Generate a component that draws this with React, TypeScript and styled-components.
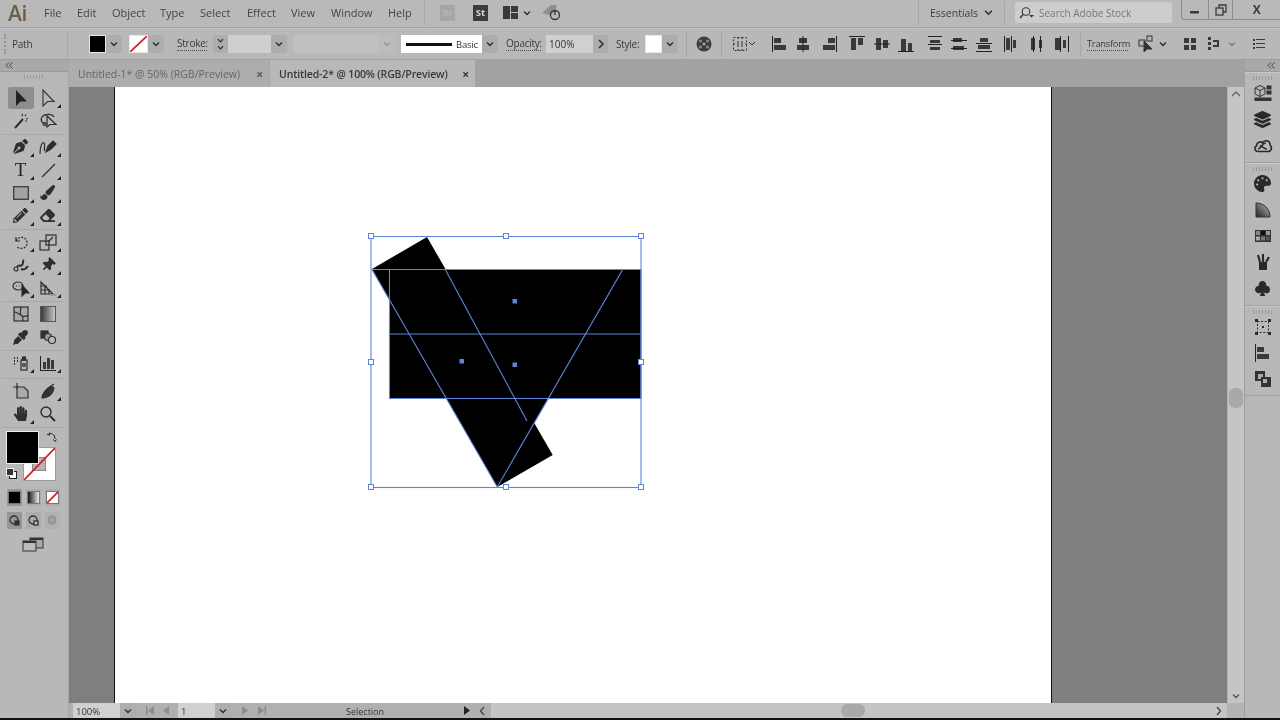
import React from "react";
import styled, { createGlobalStyle } from "styled-components";
import { FaEraser, FaEyeDropper, FaHandPaper, FaLayerGroup, FaPaintBrush, FaPalette, FaPenNib, FaPencilAlt, FaThumbtack } from "react-icons/fa";
import { BsSuitClubFill } from "react-icons/bs";

const Global = createGlobalStyle`
  html, body { margin: 0; padding: 0; background: #000; }
  body { font-family: "Open Sans", "Liberation Sans", sans-serif; }
  * { box-sizing: border-box; }
`;

const INK = "#2e2e2e";
const UI = "#b8b8b8";

const Page = styled.div`
  width: 1280px;
  height: 720px;
  overflow: hidden;
  display: flex;
  flex-direction: column;
  background: ${UI};
  color: #333;
  font-size: 10.5px;
  filter: blur(0.35px);
`;

const MenuBar = styled.div`
  height: 28px;
  flex: none;
  display: flex;
  align-items: center;
  padding-bottom: 2px;
  background: #b9b9b9;
  border-bottom: 1px solid #a4a4a4;
`;

const Logo = styled.div`
  width: 44px;
  padding-left: 8px;
  font: 600 21px/26px "Open Sans", sans-serif;
  letter-spacing: -0.5px;
  color: #6d5d4b;
`;

const MenuItem = styled.div<{ $w: number }>`
  width: ${(p) => p.$w}px;
  font-size: 11px;
  color: #444;
  white-space: nowrap;
`;

const VSep = styled.div<{ $ml?: number; $h?: number }>`
  width: 1px;
  height: ${(p) => p.$h ?? 24}px;
  flex: none;
  margin-left: ${(p) => p.$ml ?? 0}px;
  background: #a6a6a6;
`;

const AppBadge = styled.div<{ $dark?: boolean; $ml: number }>`
  width: 15px;
  height: 16px;
  margin-left: ${(p) => p.$ml}px;
  flex: none;
  display: flex;
  align-items: center;
  justify-content: center;
  font-size: 9.5px;
  font-weight: 700;
  background: ${(p) => (p.$dark ? "#3c3c3c" : "#a6a6a6")};
  color: ${(p) => (p.$dark ? "#d8d8d8" : "#b4b4b4")};
`;

const Slot = styled.div<{ $ml?: number; $w?: number; $dim?: boolean }>`
  width: ${(p) => p.$w ?? 18}px;
  height: 18px;
  margin-left: ${(p) => p.$ml ?? 0}px;
  flex: none;
  display: flex;
  align-items: center;
  justify-content: center;
  color: ${INK};
  opacity: ${(p) => (p.$dim ? 0.45 : 1)};
`;

const Workspace = styled.div`
  margin-left: 11px;
  width: 47px;
  flex: none;
  font-size: 10.5px;
  color: #3d3d3d;
  white-space: nowrap;
`;

const SearchBox = styled.div`
  width: 157px;
  height: 21px;
  margin-left: 10px;
  flex: none;
  display: flex;
  align-items: center;
  gap: 3px;
  padding-left: 3px;
  border-radius: 2px;
  background: #cdcdcd;
  color: #777;
  font-size: 10px;
`;

const WindowControls = styled.div`
  margin-left: 9px;
  align-self: flex-start;
  display: flex;
  height: 20px;
  width: 99px;
  flex: none;
  border: 1px solid #8c8c8c;
  border-top: none;
  border-right: none;
  border-radius: 0 0 0 4px;
`;

const WinButton = styled.div<{ $w: number }>`
  width: ${(p) => p.$w}px;
  display: flex;
  align-items: center;
  justify-content: center;
  color: #3a3a3a;
  font-size: 12px;
  font-weight: 700;
  & + & { border-left: 1px solid #8c8c8c; }
`;

const ControlBar = styled.div`
  height: 32px;
  flex: none;
  display: flex;
  align-items: center;
  background: ${UI};
  border-top: 1px solid #c2c2c2;
  border-bottom: 1px solid #9e9e9e;
`;

const Grip = styled.div`
  width: 3px;
  height: 20px;
  margin-left: 4px;
  flex: none;
  border-left: 2px dotted #959595;
`;

const Label = styled.div<{ $ml: number; $w?: number; $dotted?: boolean; $fs?: number }>`
  margin-left: ${(p) => p.$ml}px;
  width: ${(p) => p.$w}px;
  flex: none;
  font-size: ${(p) => p.$fs ?? 10}px;
  line-height: 13px;
  color: #3a3a3a;
  white-space: nowrap;
  letter-spacing: -0.25px;
  border-bottom: ${(p) => (p.$dotted ? "1px dotted #555" : "none")};
`;

const Swatch = styled.div<{ $ml?: number; $w?: number; $bg: string }>`
  position: relative;
  width: ${(p) => p.$w ?? 17}px;
  height: 18px;
  margin-left: ${(p) => p.$ml ?? 0}px;
  flex: none;
  background: ${(p) => p.$bg};
  border: 1px solid #e6e6e6;
  overflow: hidden;
`;

const Drop = styled.div<{ $ml?: number; $dim?: boolean; $w?: number }>`
  width: ${(p) => p.$w ?? 16}px;
  height: 18px;
  margin-left: ${(p) => p.$ml ?? 0}px;
  flex: none;
  display: flex;
  align-items: center;
  justify-content: center;
  background: ${(p) => (p.$dim ? "#bcbcbc" : "#adadad")};
  border-radius: 0 2px 2px 0;
  color: ${(p) => (p.$dim ? "#999" : INK)};
`;

const Field = styled.div<{ $w: number; $ml?: number; $bg?: string; $h?: number }>`
  width: ${(p) => p.$w}px;
  height: ${(p) => p.$h ?? 18}px;
  margin-left: ${(p) => p.$ml ?? 0}px;
  flex: none;
  display: flex;
  align-items: center;
  padding-left: 3px;
  background: ${(p) => p.$bg ?? "#d0d0d0"};
  font-size: 10px;
  color: #333;
`;

const LinePicker = styled.div`
  width: 81px;
  height: 18px;
  margin-left: 6px;
  flex: none;
  display: flex;
  align-items: center;
  gap: 4px;
  padding-left: 5px;
  background: #fff;
  font-size: 9.5px;
  letter-spacing: -0.2px;
  color: #333;
`;

const LineSample = styled.div`
  width: 46px;
  height: 3px;
  background: #111;
`;

const Stepper = styled.div`
  width: 15px;
  height: 18px;
  margin-left: 6px;
  flex: none;
  display: flex;
  flex-direction: column;
  align-items: center;
  justify-content: center;
  background: #adadad;
  color: ${INK};
`;

const Body = styled.div`
  flex: 1;
  min-height: 0;
  display: flex;
`;

const LeftPanel = styled.div`
  width: 69px;
  flex: none;
  display: flex;
  flex-direction: column;
  background: ${UI};
  border-right: 1px solid #a8a8a8;
`;

const PanelHeader = styled.div<{ $end?: boolean }>`
  height: 12px;
  flex: none;
  display: flex;
  align-items: center;
  justify-content: ${(p) => (p.$end ? "flex-end" : "flex-start")};
  padding: 0 5px;
  background: #a9a9a9;
  border-bottom: 1px solid #9a9a9a;
  color: #444;
`;

const PanelGrip = styled.div`
  width: 20px;
  height: 4px;
  margin: 3px auto 0;
  flex: none;
  background: repeating-linear-gradient(90deg, #9a9a9a 0 1px, transparent 1px 3px);
`;

const ToolGroup = styled.div<{ $pb?: number; $pt?: number; $gap?: number }>`
  padding: ${(p) => p.$pt ?? 0}px 5px ${(p) => p.$pb ?? 2}px;
  margin: 0 2px;
  border-bottom: 1px solid #a9a9a9;
  display: grid;
  grid-template-columns: 27px 27px;
  grid-auto-rows: 23px;
  row-gap: ${(p) => p.$gap ?? 0}px;
  justify-items: center;
  align-items: center;
`;

const Tool = styled.div<{ $more?: boolean; $on?: boolean }>`
  position: relative;
  width: 26px;
  height: 22px;
  display: flex;
  align-items: center;
  justify-content: center;
  color: ${INK};
  border-radius: 2px;
  background: ${(p) => (p.$on ? "#8e8e8e" : "transparent")};
  &::after {
    content: "";
    display: ${(p) => (p.$more ? "block" : "none")};
    position: absolute;
    right: 0;
    bottom: 1px;
    border-style: solid;
    border-width: 0 0 4px 4px;
    border-color: transparent transparent #222 transparent;
  }
`;

const TypeGlyph = styled.span`
  font: 400 19px "Liberation Serif", serif;
  line-height: 18px;
  color: #222;
`;

const ColorWell = styled.div`
  position: relative;
  height: 58px;
  margin-top: 3px;
  flex: none;
`;

const FillBox = styled.div`
  position: absolute;
  left: 6px;
  top: 0;
  width: 33px;
  height: 33px;
  background: #000;
  border: 1px solid #eee;
  z-index: 2;
`;

const StrokeBox = styled.div`
  position: absolute;
  left: 23px;
  top: 16px;
  width: 33px;
  height: 34px;
  background: #fff;
  border: 1px solid #999;
  overflow: hidden;
`;

const StrokeHole = styled.div`
  position: absolute;
  left: 8px;
  top: 9px;
  width: 14px;
  height: 14px;
  background: #b4b4b4;
  border: 1px solid #888;
`;

const Corner = styled.div<{ $left: number; $top: number }>`
  position: absolute;
  left: ${(p) => p.$left}px;
  top: ${(p) => p.$top}px;
  z-index: 3;
  display: flex;
  color: #222;
`;

const ModeRow = styled.div<{ $mt: number }>`
  display: flex;
  justify-content: center;
  gap: 4px;
  margin-top: ${(p) => p.$mt}px;
  padding-right: 2px;
  flex: none;
`;

const ModeButton = styled.div<{ $on?: boolean; $off?: boolean }>`
  width: 15px;
  height: 17px;
  display: flex;
  align-items: center;
  justify-content: center;
  border-radius: 1px;
  background: ${(p) => (p.$on ? "#969696" : "#adadad")};
  opacity: ${(p) => (p.$off ? 0.55 : 1)};
`;

const ModeChip = styled.div<{ $bg: string }>`
  position: relative;
  width: 13px;
  height: 13px;
  overflow: hidden;
  border: 1px solid #777;
  background: ${(p) => p.$bg};
`;

const ScreenMode = styled.div`
  display: flex;
  justify-content: center;
  margin-top: 8px;
  padding-right: 2px;
  color: #333;
`;

const Center = styled.div`
  flex: 1;
  min-width: 0;
  display: flex;
  flex-direction: column;
`;

const TabBar = styled.div`
  height: 27px;
  flex: none;
  display: flex;
  background: #a2a2a2;
`;

const Tab = styled.div<{ $active?: boolean; $w: number }>`
  width: ${(p) => p.$w}px;
  margin-right: 1px;
  flex: none;
  display: flex;
  align-items: center;
  padding: 1px 0 0 9px;
  font-size: 10.5px;
  white-space: nowrap;
  font-weight: ${(p) => (p.$active ? 600 : 400)};
  letter-spacing: ${(p) => (p.$active ? "-0.14px" : "0")};
  color: ${(p) => (p.$active ? "#383838" : "#656565")};
  background: ${(p) => (p.$active ? UI : "#adadad")};
`;

const TabClose = styled.span<{ $active?: boolean }>`
  margin-left: auto;
  margin-right: 6px;
  font-size: 12px;
  font-weight: 700;
  color: ${(p) => (p.$active ? "#333" : "#555")};
`;

const Canvas = styled.div`
  flex: 1;
  min-height: 0;
  display: flex;
  background: #7f7f7f;
  padding-left: 45px;
`;

const Artboard = styled.div`
  position: relative;
  width: 938px;
  background: #fff;
  border-left: 1px solid #111;
  border-right: 1px solid #111;
`;

const Artwork = styled.svg`
  position: absolute;
  left: 240px;
  top: 138px;
`;

const VScroll = styled.div`
  width: 17px;
  flex: none;
  display: flex;
  flex-direction: column;
  align-items: center;
  background: #c5c5c5;
  border-left: 1px solid #b0b0b0;
  color: #555;
`;

const ScrollCap = styled.div`
  height: 14px;
  flex: none;
  display: flex;
  align-items: center;
  justify-content: center;
`;

const VThumb = styled.div`
  width: 14px;
  height: 20px;
  margin-top: 287px;
  flex: none;
  background: #a9a9a9;
  border-radius: 6px;
`;

const Filler = styled.div`
  flex: 1;
`;

const StatusBar = styled.div`
  height: 15px;
  flex: none;
  display: flex;
  align-items: center;
  background: #b0b0b0;
  color: #333;
`;

const StatusField = styled(Field)`
  padding-top: 2px;
  font-size: 9.5px;
`;

const NavArrow = styled.div<{ $ml: number; $dark?: boolean }>`
  margin-left: ${(p) => p.$ml}px;
  flex: none;
  display: flex;
  color: ${(p) => (p.$dark ? "#222" : "#8d8d8d")};
`;

const StatusText = styled.div`
  margin-left: 79px;
  width: 117px;
  padding-top: 2px;
  flex: none;
  font-size: 9px;
`;

const HTrack = styled.div`
  flex: 1;
  height: 15px;
  margin-left: 5px;
  display: flex;
  align-items: center;
  background: #c5c5c5;
  color: #444;
`;

const HThumb = styled.div`
  width: 24px;
  height: 13px;
  margin-left: 350px;
  background: #a9a9a9;
  border-radius: 6px;
`;

const HEnd = styled.svg`
  margin-right: 5px;
`;

const BlackEdge = styled.div`
  height: 2px;
  flex: none;
  background: #111;
`;

const RightPanel = styled.div`
  width: 36px;
  flex: none;
  display: flex;
  flex-direction: column;
  background: ${UI};
  border-left: 1px solid #9e9e9e;
`;

const DockGroup = styled.div`
  flex: none;
  padding-bottom: 3px;
  border-bottom: 1px solid #a0a0a0;
  border-top: 1px solid #c8c8c8;
`;

const DockIcon = styled.div`
  height: 26.2px;
  display: flex;
  align-items: center;
  justify-content: center;
  color: #2a2a2a;
`;

const Chev = ({ size = 8 }: { size?: number }) => (
  <svg width={size} height={size} viewBox="0 0 8 8"><path d="M1 2.5 4 5.5 7 2.5" fill="none" stroke="currentColor" strokeWidth="1.4" /></svg>
);

const DoubleLeft = () => (
  <svg width="8" height="7" viewBox="0 0 8 7"><path d="M4 0.5 1 3.5 4 6.5M7.5 0.5 4.5 3.5 7.5 6.5" fill="none" stroke="currentColor" /></svg>
);

const Ico = ({ size = 18, children }: { size?: number; children: React.ReactNode }) => (
  <svg width={size} height={size} viewBox="0 0 18 18" fill="none" stroke={INK} strokeWidth="1.2">{children}</svg>
);

const Bars = ({ r, lines }: { r: number[][]; lines?: number[][] }) => (
  <svg width="18" height="18" viewBox="0 0 18 18">
    {r.map((b, i) => <rect key={i} x={b[0]} y={b[1]} width={b[2]} height={b[3]} fill="#3a3a3a" />)}
    {(lines || []).map((b, i) => <rect key={i} x={b[0]} y={b[1]} width={b[2]} height={b[3]} fill="#222" />)}
  </svg>
);

const Slash = () => (
  <svg width="100%" height="100%" viewBox="0 0 20 20" preserveAspectRatio="none" style={{ position: "absolute", left: 0, top: 0 }}>
    <path d="M0 20 20 0" stroke="#d8202a" strokeWidth="1.8" vectorEffect="non-scaling-stroke" />
  </svg>
);

// left-to-right: align left/center/right, top/middle/bottom, then the distribute sets
const alignSet: { x: number; r: number[][]; lines: number[][] }[] = [
  { x: 770, r: [[3, 3, 7, 5], [3, 10, 12, 5]], lines: [[1, 1, 1, 16]] },
  { x: 793, r: [[5, 3, 8, 5], [3, 10, 12, 5]], lines: [[8.5, 1, 1, 16]] },
  { x: 819, r: [[8, 3, 7, 5], [3, 10, 12, 5]], lines: [[16, 1, 1, 16]] },
  { x: 847, r: [[3, 3, 5, 12], [10, 3, 5, 7]], lines: [[1, 1, 16, 1]] },
  { x: 872, r: [[3, 3, 5, 12], [10, 5, 5, 8]], lines: [[1, 8.5, 16, 1]] },
  { x: 896, r: [[4, 4, 5, 12], [11, 8, 4, 8]], lines: [[1, 16, 16, 1]] },
  { x: 925, r: [[4, 5, 10, 3], [4, 12, 10, 3]], lines: [[2, 1, 14, 1], [2, 9, 14, 1]] },
  { x: 949, r: [[3, 3, 9, 4], [3, 11, 11, 4]], lines: [[1, 5, 16, 1], [1, 13, 16, 1]] },
  { x: 974, r: [[5, 3, 8, 4], [3, 10, 12, 4]], lines: [[1, 8, 16, 1], [1, 16, 16, 1]] },
  { x: 1002, r: [[3, 3, 4, 12], [10, 5, 3, 8]], lines: [[1, 1, 1, 16], [8, 1, 1, 16]] },
  { x: 1027, r: [[3, 3, 4, 12], [11, 5, 3, 8]], lines: [[5, 1, 1, 16], [12, 1, 1, 16]] },
  { x: 1051, r: [[3, 3, 5, 12], [11, 5, 3, 8]], lines: [[8, 1, 1, 16], [16, 1, 1, 16]] },
];

const menu: [string, number][] = [
  ["File", 33], ["Edit", 35], ["Object", 48], ["Type", 40], ["Select", 47],
  ["Effect", 44], ["View", 40], ["Window", 57], ["Help", 36],
];

export default function App() {
  let alignPrev = 755;
  return (
    <Page>
      <Global />
      <MenuBar>
        <Logo>Ai</Logo>
        {menu.map(([m, w]) => <MenuItem key={m} $w={w}>{m}</MenuItem>)}
        <VSep />
        <AppBadge $ml={15}>Br</AppBadge>
        <AppBadge $dark $ml={18}>St</AppBadge>
        <Slot $ml={14}>
          <Bars r={[[1, 2, 7, 13], [9, 2, 7, 6], [9, 9, 7, 6]]} />
        </Slot>
        <Slot $w={14}><Chev /></Slot>
        <Slot $ml={7} $w={22}>
          <svg width="22" height="18" viewBox="0 0 22 18">
            <path d="M1 9 10 1 16 1 14 8 8 11Z" fill="#8f8f8f" />
            <circle cx="14" cy="11" r="4.5" fill="none" stroke="#333" strokeWidth="1.3" />
            <path d="M14 6v5" stroke="#333" strokeWidth="1.3" />
          </svg>
        </Slot>
        <VSep $ml={355} />
        <Workspace>Essentials</Workspace>
        <Slot $ml={3} $w={16}><Chev size={9} /></Slot>
        <VSep $ml={8} />
        <SearchBox>
          <svg width="18" height="14" viewBox="0 0 18 14">
            <circle cx="8" cy="5.5" r="3.8" fill="none" stroke="#333" strokeWidth="1.1" />
            <path d="M5.3 8.2 2 12" stroke="#333" strokeWidth="1.3" />
            <path d="M11 9h5l-2.5 2.5Z" fill="#333" />
          </svg>
          Search Adobe Stock
        </SearchBox>
        <WindowControls>
          <WinButton $w={26}><svg width="10" height="10" viewBox="0 0 10 10"><rect x="0" y="6" width="9" height="2.5" fill="#3a3a3a" /></svg></WinButton>
          <WinButton $w={25}><svg width="12" height="12" viewBox="0 0 12 12" fill="none" stroke="#3a3a3a" strokeWidth="1.3"><rect x="1" y="4" width="7" height="7" /><path d="M4 4V1h7v7H8" /></svg></WinButton>
          <WinButton $w={48}>X</WinButton>
        </WindowControls>
      </MenuBar>

      <ControlBar>
        <Grip />
        <Label $ml={5} $w={35}>Path</Label>
        <VSep $ml={20} $h={26} />
        <Swatch $ml={21} $bg="#000" />
        <Drop><Chev /></Drop>
        <Swatch $ml={7} $w={19} $bg="#fff"><Slash /></Swatch>
        <Drop><Chev /></Drop>
        <Label $ml={13} $w={30} $dotted>Stroke:</Label>
        <Stepper><Chev size={7} /><Chev size={7} /></Stepper>
        <Field $w={43} $bg="#cfcfcf" />
        <Drop><Chev /></Drop>
        <Field $w={85} $ml={6} $bg="#c0c0c0" />
        <Drop $dim $w={17}><Chev /></Drop>
        <LinePicker><LineSample />Basic</LinePicker>
        <Drop><Chev /></Drop>
        <Label $ml={8} $w={35} $dotted>Opacity:</Label>
        <Field $w={47} $ml={5}>100%</Field>
        <Drop $w={15}><svg width="8" height="10" viewBox="0 0 8 10"><path d="M2 1 6 5 2 9" fill="none" stroke="#222" strokeWidth="1.4" /></svg></Drop>
        <Label $ml={8} $w={23}>Style:</Label>
        <Swatch $ml={6} $bg="#fff" />
        <Drop><Chev /></Drop>
        <VSep $ml={8} $h={26} />
        <Slot $ml={8}>
          <svg width="16" height="16" viewBox="0 0 16 16">
            <circle cx="8" cy="8" r="7.5" fill="#3c3c3c" />
            <circle cx="8" cy="8" r="1.5" fill="#aaa" />
            <circle cx="4.5" cy="5" r="1.6" fill="#8c8c8c" /><circle cx="11.5" cy="5" r="1.6" fill="#8c8c8c" />
            <circle cx="4.5" cy="11" r="1.6" fill="#8c8c8c" /><circle cx="11.5" cy="11" r="1.6" fill="#8c8c8c" />
          </svg>
        </Slot>
        <VSep $ml={8} $h={26} />
        <Slot $ml={10} $w={24}>
          <svg width="24" height="16" viewBox="0 0 24 16" fill="none" stroke="#333">
            <rect x="1.5" y="1.5" width="13" height="13" strokeDasharray="2 2" />
            <path d="M6 1v14M10 1v14M1 8h14" strokeDasharray="2 2" />
            <path d="M17 6l3 3 3-3" />
          </svg>
        </Slot>
        {alignSet.map((a) => {
          const ml = a.x - alignPrev;
          alignPrev = a.x + 18;
          return <Slot key={a.x} $ml={ml}><Bars r={a.r} lines={a.lines} /></Slot>;
        })}
        <VSep $ml={10} $h={26} />
        <Label $ml={6} $w={41} $fs={9.3} $dotted>Transform</Label>
        <Slot $ml={9} $w={20}>
          <svg width="20" height="18" viewBox="0 0 20 18" fill="none" stroke="#333">
            <rect x="2" y="5" width="6" height="6" /><rect x="10" y="1" width="5" height="5" />
            <path d="M7 6 7 17 10 14 15 14Z" fill="#333" />
          </svg>
        </Slot>
        <Slot $w={12}><Chev /></Slot>
        <Slot $ml={12}><Bars r={[[3, 3, 5, 5], [10, 3, 5, 5], [3, 10, 5, 5], [10, 10, 5, 5]]} /></Slot>
        <Slot $ml={6}><Bars r={[[3, 2, 3, 3], [3, 7, 3, 3], [3, 12, 3, 3], [8, 5, 6, 2], [8, 10, 6, 2], [12, 5, 2, 7]]} /></Slot>
        <Slot $ml={3} $w={12} $dim><Chev /></Slot>
        <Slot $ml={12}><Bars r={[[3, 4, 2, 2], [3, 8, 2, 2], [3, 12, 2, 2], [6, 4, 9, 1], [6, 8, 9, 1], [6, 12, 9, 1]]} /></Slot>
      </ControlBar>

      <Body>
        <LeftPanel>
          <PanelHeader><DoubleLeft /></PanelHeader>
          <PanelGrip />
          <ToolGroup $pt={7}>
            <Tool $on><svg width="18" height="18" viewBox="0 0 18 18"><path d="M4 1V17L8.5 12.5H15Z" fill="#222" /></svg></Tool>
            <Tool $more><svg width="18" height="18" viewBox="0 0 18 18"><path d="M4 1V17L8.5 12.5H15Z" fill="none" stroke="#333" strokeWidth="1.1" /></svg></Tool>
            <Tool>
              <Ico><path d="M3 16 11 7" strokeWidth="2" /><path d="M10 2l.6 2M14 2.5 13 4M16 6.5l-2 .5M14.5 9.5l-1-1" /></Ico>
            </Tool>
            <Tool>
              <Ico><path d="M9 12C3 13 1 8 3 5s10-4 12 0" /><circle cx="5.5" cy="12" r="1.5" /><path d="M8 4 8 15 11 12.5 17 12.5Z" fill="#bbb" /></Ico>
            </Tool>
          </ToolGroup>
          <ToolGroup>
            <Tool $more><FaPenNib size={15} /></Tool>
            <Tool $more>
              <Ico><path d="M1 16C1 9 3 3 5 5s-1 6 1 8" /><path d="M7 14 9 8 14 3 17 6 12 11Z" fill="#2e2e2e" /></Ico>
            </Tool>
            <Tool $more><TypeGlyph>T</TypeGlyph></Tool>
            <Tool $more><Ico><path d="M3 16 16 3" /></Ico></Tool>
            <Tool $more><svg width="16" height="14" viewBox="0 0 16 14"><rect x="0.7" y="0.7" width="14.6" height="12.6" fill="#a2a2a2" stroke="#333" strokeWidth="1.2" /></svg></Tool>
            <Tool $more><FaPaintBrush size={15} /></Tool>
            <Tool $more><FaPencilAlt size={15} /></Tool>
            <Tool $more><FaEraser size={15} /></Tool>
          </ToolGroup>
          <ToolGroup>
            <Tool $more>
              <Ico><path d="M4 4v4h4" /><path d="M4 8C6 3 14 3 15 9s-6 8-10 5" strokeDasharray="2 1.3" /></Ico>
            </Tool>
            <Tool $more>
              <Ico><rect x="7" y="2" width="10" height="10" /><rect x="1" y="8" width="9" height="9" /><path d="M9 9l5-5" /></Ico>
            </Tool>
            <Tool $more>
              <Ico><circle cx="4" cy="13" r="2" /><path d="M5 11c2-3 3 0 5-2s0-4 2-5" strokeWidth="2" /><path d="M9 13c2 1 5 0 7-3" strokeWidth="2" /></Ico>
            </Tool>
            <Tool $more><FaThumbtack size={14} style={{ transform: "rotate(45deg)" }} /></Tool>
            <Tool $more>
              <Ico><ellipse cx="6" cy="7" rx="5" ry="4" /><path d="M4 7h5" strokeDasharray="1 1.5" /><path d="M10 6 10 17 13 14 17 14Z" fill="#222" /></Ico>
            </Tool>
            <Tool $more>
              <Ico><path d="M2 15V3L14 15ZM6 15V6M10 15V10M2 7h6M2 11h9" /><path d="M11 16h6" strokeWidth="2" stroke="#999" /></Ico>
            </Tool>
          </ToolGroup>
          <ToolGroup $pb={1} $gap={1}>
            <Tool>
              <Ico><rect x="2" y="2" width="14" height="14" fill="#a9a9a9" /><path d="M2 7c4 0 5 3 7 3s2 6 2 6M9 2c0 4-2 5 0 8s5 0 7 1" /></Ico>
            </Tool>
            <Tool>
              <svg width="16" height="16" viewBox="0 0 16 16">
                <defs><linearGradient id="gt"><stop offset="0" stopColor="#333" /><stop offset="1" stopColor="#ccc" /></linearGradient></defs>
                <rect x="0.5" y="0.5" width="15" height="15" fill="url(#gt)" stroke="#555" />
              </svg>
            </Tool>
            <Tool><FaEyeDropper size={15} /></Tool>
            <Tool>
              <Ico><rect x="2" y="2" width="7" height="7" fill="#333" /><circle cx="9" cy="8" r="3.5" fill="#999" /><circle cx="13" cy="11" r="3.5" fill="#bbb" /></Ico>
            </Tool>
          </ToolGroup>
          <ToolGroup $pb={4}>
            <Tool $more>
              <Ico><rect x="9" y="6" width="6" height="10" /><rect x="10.5" y="3" width="3" height="3" fill="#333" /><circle cx="12" cy="11" r="1.4" /><path d="M2 4h1M5 4h1M2 7h1M5 7h1M2 10h1" strokeWidth="2" /></Ico>
            </Tool>
            <Tool $more>
              <Bars r={[[4, 8, 3, 7], [8, 4, 3, 11], [12, 6, 3, 9]]} lines={[[1, 2, 1, 15], [1, 16, 16, 1]]} />
            </Tool>
          </ToolGroup>
          <ToolGroup>
            <Tool>
              <Ico><path d="M1 5h6M5 1v6" /><path d="M5 5h7l4 4v7H5Z" fill="#aaa" /></Ico>
            </Tool>
            <Tool $more>
              <Ico><path d="M3 16c0-4 4-9 9-12l3 2c-1 6-5 9-10 10Z" fill="#333" /><path d="M11 5l4-3" /></Ico>
            </Tool>
            <Tool $more><FaHandPaper size={15} /></Tool>
            <Tool>
              <Ico><circle cx="7" cy="7" r="5" strokeWidth="1.4" /><path d="M11 11l5 5" strokeWidth="2" /></Ico>
            </Tool>
          </ToolGroup>
          <ColorWell>
            <FillBox />
            <StrokeBox><StrokeHole /><Slash /></StrokeBox>
            <Corner $left={46} $top={0}>
              <svg width="12" height="12" viewBox="0 0 12 12" fill="none" stroke="#222"><path d="M2 4C5 1 9 3 9 8" /><path d="M1 3.5h3M3.5 1.5v3M7.5 8.5l1.5 2 1.5-2" /></svg>
            </Corner>
            <Corner $left={6} $top={37}>
              <svg width="11" height="11" viewBox="0 0 11 11"><rect x="3.5" y="3.5" width="7" height="7" fill="#fff" stroke="#222" /><rect x="0.5" y="0.5" width="7" height="7" fill="#333" stroke="#eee" /></svg>
            </Corner>
          </ColorWell>
          <ModeRow $mt={0}>
            <ModeButton $on><ModeChip $bg="#000" /></ModeButton>
            <ModeButton><ModeChip $bg="linear-gradient(90deg,#111,#eee)" /></ModeButton>
            <ModeButton><ModeChip $bg="#fff"><Slash /></ModeChip></ModeButton>
          </ModeRow>
          <ModeRow $mt={6}>
            <ModeButton $on><svg width="11" height="11" viewBox="0 0 11 11" fill="none" stroke="#333" strokeWidth="1.3"><circle cx="5" cy="5" r="4" /><rect x="6" y="6" width="4" height="4" fill="#333" /></svg></ModeButton>
            <ModeButton><svg width="11" height="11" viewBox="0 0 11 11" fill="none" stroke="#333" strokeWidth="1.3"><circle cx="5" cy="5" r="4" /><rect x="6" y="6" width="4" height="4" fill="#bbb" /></svg></ModeButton>
            <ModeButton $off><svg width="11" height="11" viewBox="0 0 11 11" fill="none" stroke="#555"><circle cx="5" cy="5" r="4" /><circle cx="5" cy="5" r="2" /></svg></ModeButton>
          </ModeRow>
          <ScreenMode>
            <svg width="22" height="15" viewBox="0 0 22 15">
              <rect x="8" y="1" width="13" height="10" fill="#aaa" stroke="#333" />
              <rect x="8" y="1" width="13" height="2" fill="#333" />
              <rect x="1" y="4" width="13" height="10" fill="#bbb" stroke="#333" />
              <rect x="1" y="4" width="13" height="2" fill="#333" />
            </svg>
          </ScreenMode>
        </LeftPanel>

        <Center>
          <TabBar>
            <Tab $w={200}>Untitled-1* @ 50% (RGB/Preview)<TabClose>×</TabClose></Tab>
            <Tab $active $w={205}>Untitled-2* @ 100% (RGB/Preview)<TabClose $active>×</TabClose></Tab>
          </TabBar>
          <Canvas>
            <Artboard>
              <Artwork width="300" height="275" viewBox="355 225 300 275">
                <path d="M389.5 269.5H641V398.5H389.5Z" fill="#000" />
                <path d="M372 269 427 237 552.7 455 497.3 487Z" fill="#000" />
                <path d="M372 269H622.7L497.3 487Z" fill="#000" />
                <g fill="none" stroke="#5f86dc" strokeWidth="1.1">
                  <path d="M389.5 269.5H641V398.5H389.5ZM389.5 334H641" />
                  <path d="M372 269.5H622.7L497.3 487Z" />
                  <path d="M445 269 527 421" />
                  <rect x="371" y="236.5" width="270" height="251" />
                </g>
                <g fill="#fff" stroke="#5f86dc">
                  {[[371, 236], [506, 236], [641, 236], [371, 362], [641, 362], [371, 487], [506, 487], [641, 487]].map(([x, y]) => (
                    <rect key={`${x}-${y}`} x={x - 2.5} y={y - 2.5} width="5" height="5" />
                  ))}
                </g>
                <g fill="#5f86dc">
                  <rect x="512.5" y="299" width="4.5" height="4.5" />
                  <rect x="459.5" y="359" width="4.5" height="4.5" />
                  <rect x="512.5" y="362.5" width="4.5" height="4.5" />
                </g>
              </Artwork>
            </Artboard>
            <Filler />
            <VScroll>
              <ScrollCap><svg width="10" height="6" viewBox="0 0 10 6"><path d="M1 5 5 1 9 5" fill="none" stroke="#666" strokeWidth="1.4" /></svg></ScrollCap>
              <VThumb />
              <Filler />
              <ScrollCap><Chev /></ScrollCap>
            </VScroll>
          </Canvas>
          <StatusBar>
            <StatusField $w={47} $ml={4} $h={15}>100%</StatusField>
            <Drop $w={16}><Chev /></Drop>
            <NavArrow $ml={9}><svg width="10" height="9" viewBox="0 0 10 9" fill="currentColor"><path d="M1 0h1.5v9H1ZM9 0v9L3 4.5Z" /></svg></NavArrow>
            <NavArrow $ml={8}><svg width="7" height="9" viewBox="0 0 7 9" fill="currentColor"><path d="M6 0v9L0 4.5Z" /></svg></NavArrow>
            <StatusField $w={37} $ml={8} $h={15}>1</StatusField>
            <Drop $w={16}><Chev /></Drop>
            <NavArrow $ml={10}><svg width="7" height="9" viewBox="0 0 7 9" fill="currentColor"><path d="M1 0v9L7 4.5Z" /></svg></NavArrow>
            <NavArrow $ml={9}><svg width="10" height="9" viewBox="0 0 10 9" fill="currentColor"><path d="M9 0H7.5v9H9ZM1 0v9L7 4.5Z" /></svg></NavArrow>
            <StatusText>Selection</StatusText>
            <NavArrow $ml={0} $dark><svg width="7" height="9" viewBox="0 0 7 9" fill="currentColor"><path d="M1 0v9L7 4.5Z" /></svg></NavArrow>
            <NavArrow $ml={9}><svg width="7" height="10" viewBox="0 0 7 10" fill="none" stroke="#444" strokeWidth="1.3"><path d="M5 1 1.5 5 5 9" /></svg></NavArrow>
            <HTrack>
              <HThumb />
              <Filler />
              <HEnd width="7" height="10" viewBox="0 0 7 10" fill="none" stroke="#444" strokeWidth="1.3"><path d="M2 1 5.5 5 2 9" /></HEnd>
              <Field $w={17} $h={15} $bg="#b4b4b4" />
            </HTrack>
          </StatusBar>
        </Center>

        <RightPanel>
          <PanelHeader $end><DoubleLeft /></PanelHeader>
          <DockGroup>
            <PanelGrip />
            <DockIcon>
              <svg width="20" height="18" viewBox="0 0 20 18" fill="none" stroke="#333">
                <path d="M2 4 7 1.5 12 4V10L7 12.5 2 10ZM2 4 7 6.5 12 4M7 6.5V12.5" />
                <rect x="14" y="2" width="4" height="3" fill="#333" /><rect x="14" y="7" width="4" height="3" fill="#333" />
                <rect x="2" y="14" width="16" height="2.5" fill="#333" />
              </svg>
            </DockIcon>
            <DockIcon><FaLayerGroup size={17} /></DockIcon>
            <DockIcon>
              <svg width="20" height="15" viewBox="0 0 20 15" fill="none" stroke="#2a2a2a" strokeWidth="1.6">
                <path d="M5 13.5C1.5 13.5 1 9 3.5 8 3.5 4 8 3 9.5 5 11 1.5 17 2 17 7c2.5 2 1.5 6.5-2 6.5ZM5 11C8 11 9 4.5 13 5M7 7.5c2 .5 4 3.5 7 3.5" />
              </svg>
            </DockIcon>
          </DockGroup>
          <DockGroup>
            <PanelGrip />
            <DockIcon><FaPalette size={17} /></DockIcon>
            <DockIcon>
              <svg width="16" height="16" viewBox="0 0 16 16">
                <defs><linearGradient id="sw" x1="0" y1="1" x2="1" y2="0"><stop offset="0" stopColor="#222" /><stop offset="1" stopColor="#bbb" /></linearGradient></defs>
                <path d="M1 1C9 1 15 7 15 15H1Z" fill="url(#sw)" stroke="#333" />
              </svg>
            </DockIcon>
            <DockIcon>
              <svg width="16" height="12" viewBox="0 0 16 12">
                <rect width="16" height="12" fill="#333" />
                <rect x="1" y="1" width="4" height="4" fill="#888" /><rect x="6" y="1" width="4" height="4" fill="#111" /><rect x="11" y="1" width="4" height="4" fill="#999" />
                <rect x="1" y="6.5" width="4" height="4" fill="#aaa" /><rect x="6" y="6.5" width="4" height="4" fill="#777" /><rect x="11" y="6.5" width="4" height="4" fill="#555" />
              </svg>
            </DockIcon>
            <DockIcon>
              <svg width="16" height="18" viewBox="0 0 16 18">
                <path d="M4 9h8v8H4Z" fill="#2a2a2a" />
                <path d="M5 9 3 2M8 9V1M11 9l3-5" stroke="#2a2a2a" strokeWidth="2.2" />
              </svg>
            </DockIcon>
            <DockIcon><BsSuitClubFill size={17} /></DockIcon>
          </DockGroup>
          <DockGroup>
            <PanelGrip />
            <DockIcon>
              <svg width="16" height="16" viewBox="0 0 16 16" fill="#2a2a2a">
                <rect x="2.5" y="2.5" width="11" height="11" fill="none" stroke="#2a2a2a" strokeDasharray="2 1.6" />
                <rect x="0" y="0" width="3" height="3" /><rect x="13" y="0" width="3" height="3" /><rect x="0" y="13" width="3" height="3" /><rect x="13" y="13" width="3" height="3" />
                <rect x="7" y="7" width="2" height="2" />
              </svg>
            </DockIcon>
            <DockIcon><Bars r={[[3, 3, 7, 5], [3, 10, 12, 5]]} lines={[[1, 0, 1, 18]]} /></DockIcon>
            <DockIcon>
              <svg width="16" height="16" viewBox="0 0 16 16">
                <rect x="0" y="0" width="10" height="10" fill="#333" />
                <rect x="3" y="3" width="5" height="5" fill="#aaa" />
                <rect x="6" y="6" width="10" height="10" fill="#333" />
                <rect x="8" y="8" width="4" height="4" fill="#aaa" />
              </svg>
            </DockIcon>
          </DockGroup>
        </RightPanel>
      </Body>
      <BlackEdge />
    </Page>
  );
}
